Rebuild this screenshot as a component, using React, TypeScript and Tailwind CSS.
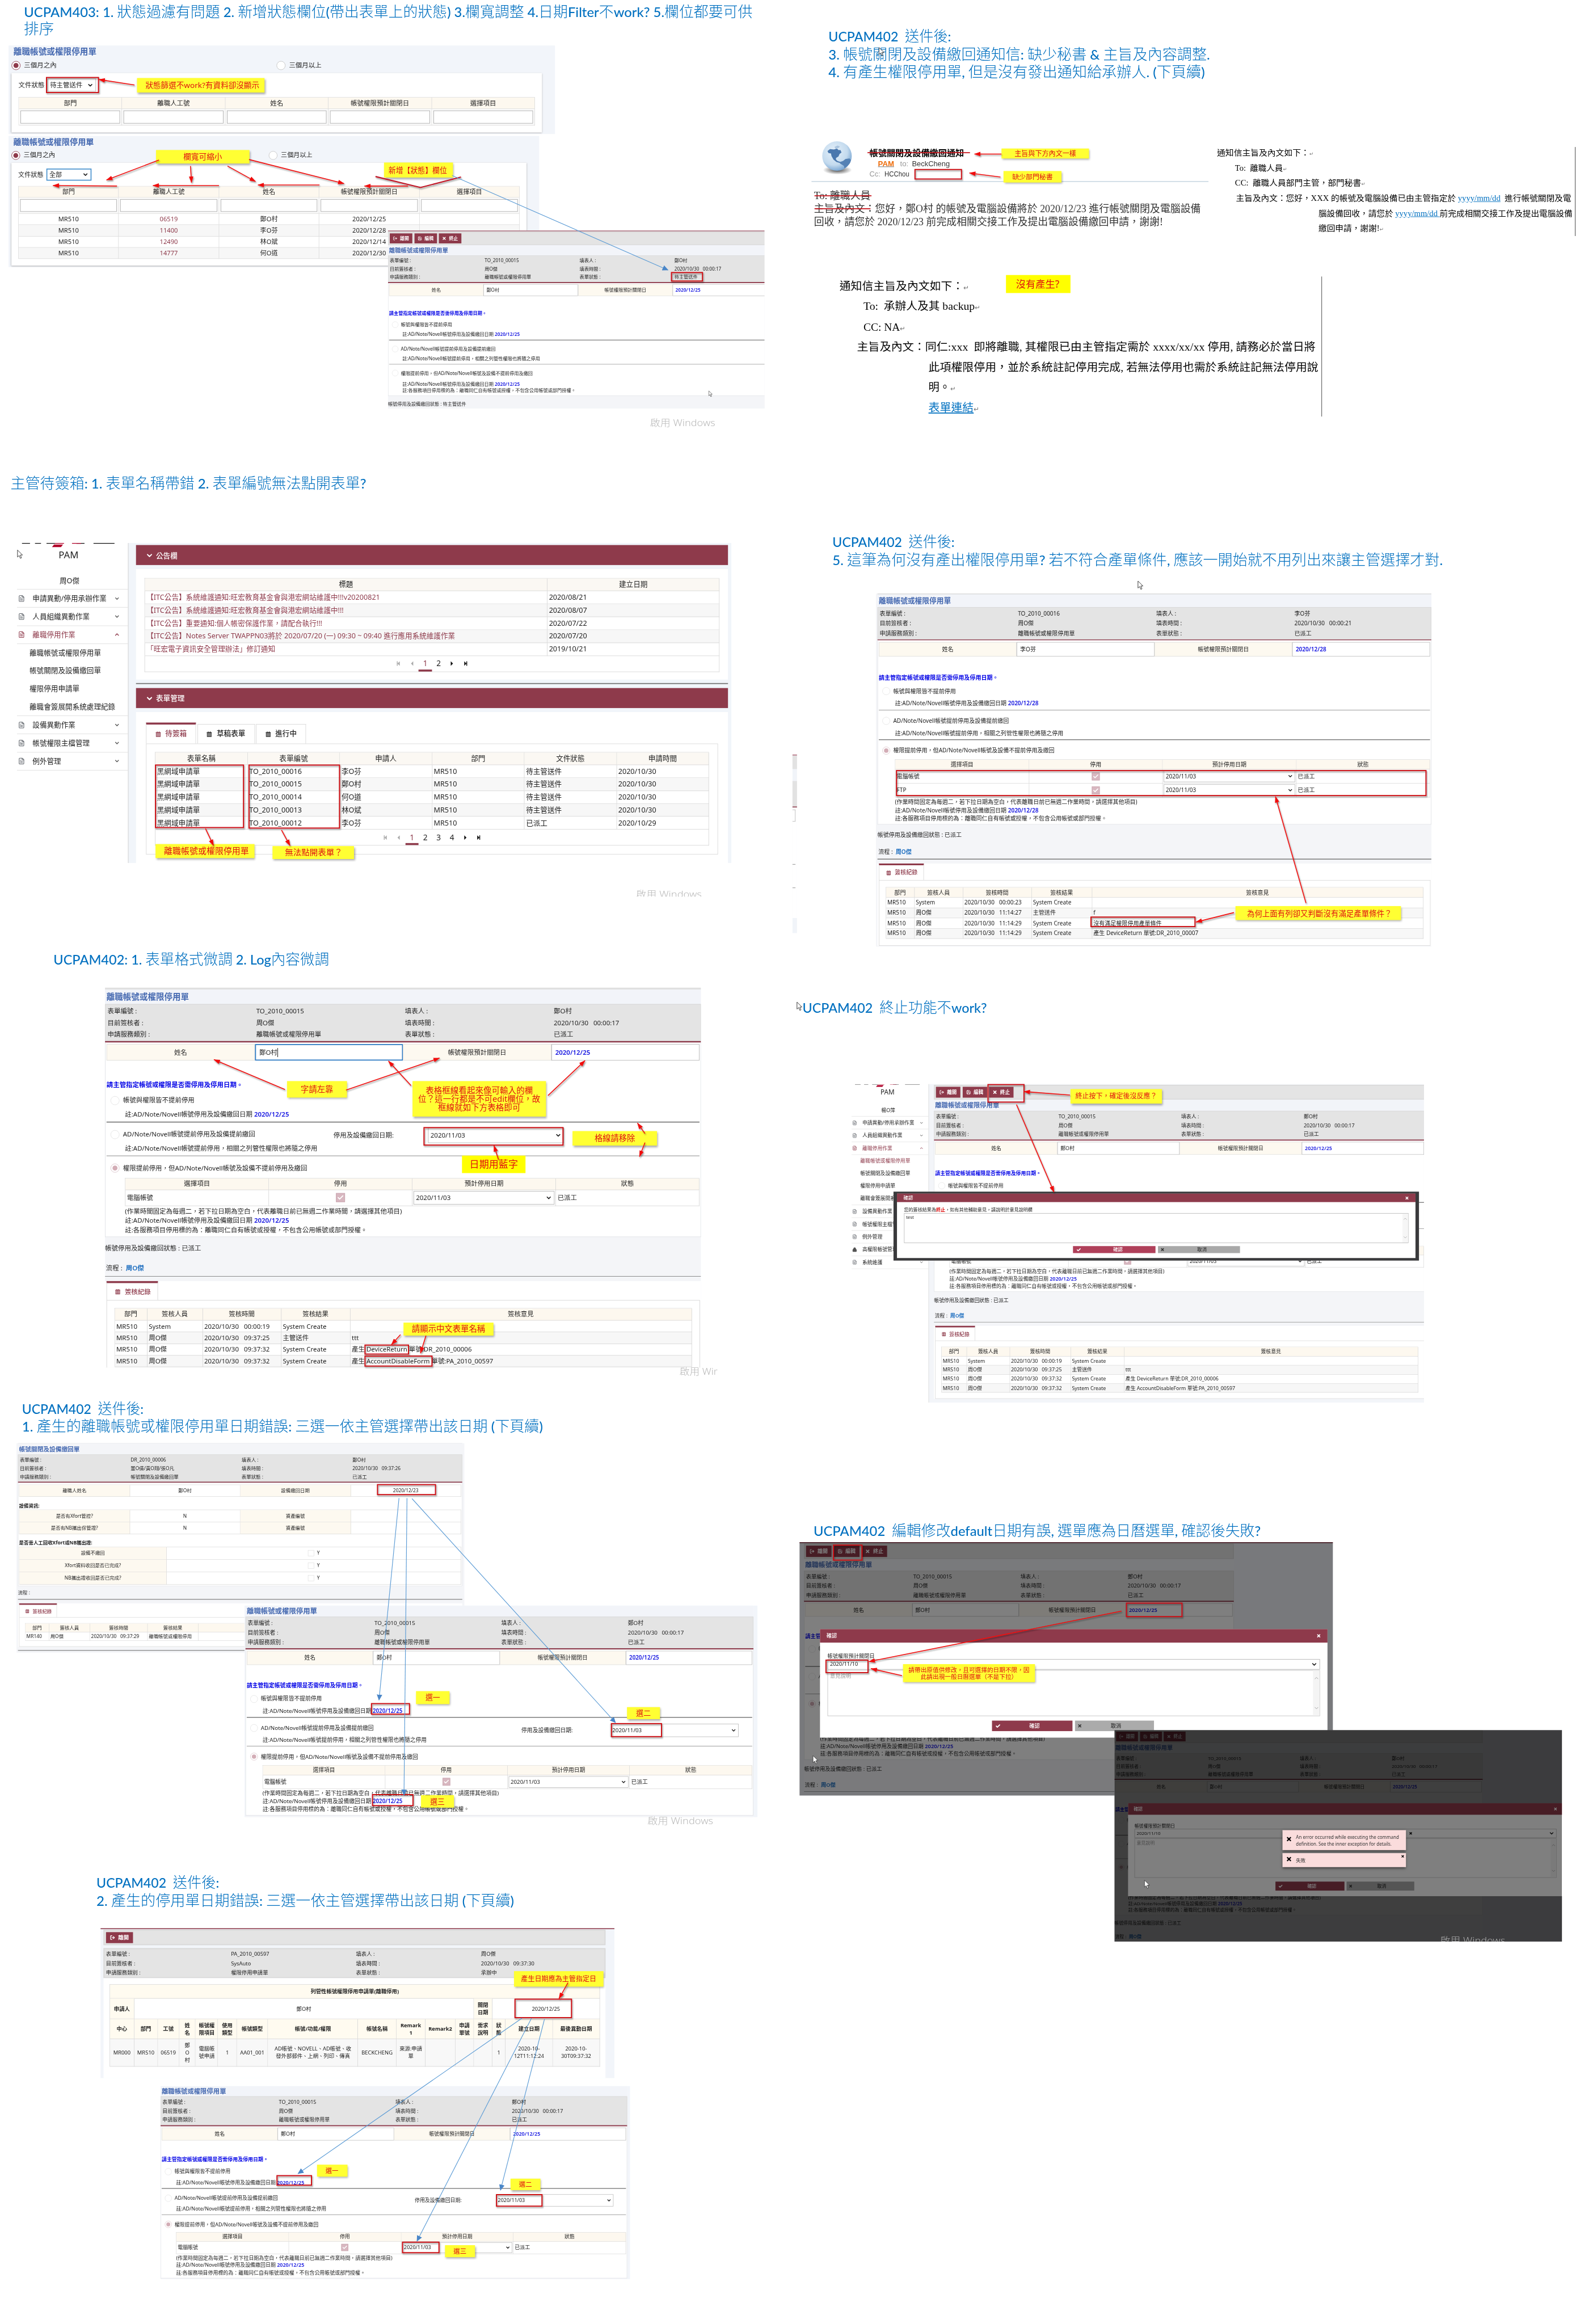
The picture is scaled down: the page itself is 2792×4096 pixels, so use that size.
import { useLayoutEffect, useRef, useState, type ReactNode } from "react";
import { ChevronDown, ChevronUp, FileText, Check, X, LogOut, Save, Lock } from "lucide-react";

/* ---------- text helpers ---------- */

function Fit({ w, className = "", children }: { w: number; className?: string; children: ReactNode }) {
  const ref = useRef<HTMLSpanElement>(null);
  const [k, setK] = useState(1);
  useLayoutEffect(() => {
    if (ref.current) setK(w / ref.current.offsetWidth);
  }, [w]);
  return (
    <span ref={ref} className={`inline-block origin-left whitespace-pre ${className}`} style={{ transform: `scaleX(${k})` }}>
      {children}
    </span>
  );
}

function Mixed({ text }: { text: string }) {
  return (
    <>
      {text.split(/([\x20-\x7e]+)/).map((part, i) =>
        /^[\x20-\x7e]+$/.test(part) ? (
          <span key={i} className="font-['Lato'] text-[0.92em] font-medium">{part}</span>
        ) : (
          part
        )
      )}
    </>
  );
}

type TitleLine = { x: number; cy: number; w: number; text: string };

function Title({ x, cy, w, text }: TitleLine) {
  return (
    <h2
      className="absolute flex h-[36px] items-center font-['Noto_Sans_CJK_TC',sans-serif] text-[29.4px] leading-none font-light text-[#0070c0]"
      style={{ left: x, top: cy - 20 }}
    >
      <Fit w={w}><Mixed text={text} /></Fit>
    </h2>
  );
}

/* ---------- shared widgets ---------- */

function Radio({ on = false, pale = false, dim = false }: { on?: boolean; pale?: boolean; dim?: boolean }) {
  return (
    <span className={`flex h-[18px] w-[18px] shrink-0 items-center justify-center rounded-full border bg-white ${on && !pale ? "border-[#8e3a4b]" : dim ? "border-[#e2e2e2]" : on ? "border-[#d9c3c9]" : "border-[#c4c4c4]"}`}>
      {on && <span className={`h-[10px] w-[10px] rounded-full ${pale ? "bg-[#d3adb6]" : "bg-[#8e3a4b]"}`} />}
    </span>
  );
}

function Select({ children, className = "" }: { children: ReactNode; className?: string }) {
  return (
    <span className={`flex items-center justify-between border border-[#b3b3b3] bg-white px-[4px] ${className}`}>
      {children}
      <ChevronDown className="h-[13px] w-[13px] text-[#222]" strokeWidth={3.5} />
    </span>
  );
}

function BookIcon() {
  return (
    <svg viewBox="0 0 11 12" className="h-[12px] w-[11px]" fill="none" stroke="currentColor">
      <path d="M.5 3h10M1.500 3v8h8V3M3.500 1v10M5.500 2v9M7.500 1v10M1.500 11h8" strokeWidth="1.200" />
    </svg>
  );
}

function Cursor({ className, light = false }: { className: string; light?: boolean }) {
  return (
    <svg viewBox="0 0 12 19" className={`absolute h-[19px] w-[12px] ${className}`}>
      <path d="M1 1v14l3.4-3 2.3 5.6 2.3-1L6.700 11H11z" fill="#fff" stroke={light ? "#333" : "#222"} strokeWidth="1" />
    </svg>
  );
}

/* ---------- filter list pane ---------- */

const filterHeads = ["部門", "離職人工號", "姓名", "帳號權限預計關閉日", "選擇項目"];

function FilterPane({ status, active, rows }: { status: string; active?: boolean; rows: string[][] }) {
  return (
    <div className="w-[1093px] bg-[#f2f5fa] pr-[26px] pb-[3px] pl-[6px]">
      <div className="flex h-[24px] items-center pl-[4px] text-[16.6px] font-bold text-[#4468b0]">離職帳號或權限停用單</div>
      <div className="flex h-[31px] items-center">
        <div className="flex w-[530px] items-center gap-[7px]"><Radio on />三個月之內</div>
        <div className="flex items-center gap-[7px]"><Radio />三個月以上</div>
      </div>
      <div className="bg-white px-[14px] pb-[14px] shadow-[0_1px_3px_#999]">
        <div className="flex h-[48px] items-center gap-[6px]">
          文件狀態
          <Select className={active ? "h-[25px] w-[93px] !border-2 !border-[#4a93cf]" : "h-[26px] w-[97px]"}>{status}</Select>
        </div>
        <div className="border-t border-l border-[#dcdcdc]">
          <div className="grid grid-cols-5 bg-[#fdf8ef]">
            {filterHeads.map((h) => (
              <div key={h} className="flex h-[23px] items-center justify-center border-r border-b border-[#dcdcdc]">{h}</div>
            ))}
            {filterHeads.map((h) => (
              <div key={h} className="h-[33px] border-r border-b border-[#dcdcdc] bg-[#fafafa] px-[3px] py-[3px]">
                <div className="h-full border border-[#ababab] bg-white" />
              </div>
            ))}
          </div>
          {rows.map((r, i) => (
            <div key={r[1]} className={`grid grid-cols-5 ${i % 2 ? "bg-[#f7f7f7]" : "bg-white"}`}>
              {r.map((c, j) => (
                <div key={j} className={`flex h-[23.3px] items-center justify-center border-r border-b border-[#dcdcdc] ${j === 1 ? "text-[#8e3a4b]" : ""}`}>{c}</div>
              ))}
            </div>
          ))}
        </div>
      </div>
    </div>
  );
}

/* ---------- form pieces ---------- */

function InfoBlock({ cells, className = "" }: { cells: string[]; className?: string }) {
  return (
    <div className={`grid h-[74px] grid-cols-4 border border-[#d6d6d6] bg-[#e4e4e4] pt-[2.500px] whitespace-pre ${className}`}>
      {cells.map((c, i) => (
        <div key={i} className="flex h-[22.3px] items-center pl-[4px]">{c}</div>
      ))}
    </div>
  );
}

function ToolButton({ icon, children }: { icon: ReactNode; children: ReactNode }) {
  return (
    <span className="flex h-[28px] w-[63px] items-center justify-center gap-[7px] bg-[#8e3a4b] text-[12.5px] font-bold text-white">
      {icon}
      {children}
    </span>
  );
}

function Toolbar({ full = true }: { full?: boolean }) {
  return (
    <div className="flex h-[38px] items-center gap-[5.500px] border-2 border-[#d9d9d9] bg-[#e4e4e4] pl-[3px]">
      <ToolButton icon={<LogOut className="h-[12px] w-[12px]" strokeWidth={3} />}>離開</ToolButton>
      {full && <ToolButton icon={<Save className="h-[12px] w-[12px]" strokeWidth={2.5} />}>編輯</ToolButton>}
      {full && <ToolButton icon={<X className="h-[12px] w-[12px]" strokeWidth={5} />}>終止</ToolButton>}
    </div>
  );
}

function RecordTab() {
  return (
    <div className="flex h-[38px] w-[103px] items-center gap-[9px] border-x border-t-[4px] border-[#d5d5d5] border-t-[#8e3a4b] bg-white pl-[16px] font-medium text-[#8e3a4b]">
      <BookIcon />簽核紀錄
    </div>
  );
}

const logCols = "grid grid-cols-[65px_111px_157px_138px_1fr]";

function LogTable({ rows }: { rows: string[][] }) {
  return (
    <div className="border-t border-l border-[#d8d8d8] whitespace-pre">
      <div className={`${logCols} bg-[#fdf8ef]`}>
        {["部門", "簽核人員", "簽核時間", "簽核結果", "簽核意見"].map((h) => (
          <div key={h} className="flex h-[23.500px] items-center justify-center border-r border-b border-[#d8d8d8]">{h}</div>
        ))}
      </div>
      {rows.map((r, i) => (
        <div key={i} className={`${logCols} ${i % 2 ? "bg-[#f7f7f7]" : "bg-white"}`}>
          {r.map((c, j) => (
            <div key={j} className="flex h-[23.400px] items-center border-r border-b border-[#d8d8d8] pl-[3px]">{c}</div>
          ))}
        </div>
      ))}
    </div>
  );
}

type FormProps = {
  no?: string;
  who?: string;
  time?: string;
  state?: string;
  date?: string;
  toolbar?: boolean;
  topLine?: string;
  titleClass?: string;
  focused?: boolean;
  picker?: string;
  items?: string[];
  tail?: boolean;
  logs?: string[][];
};

function DisableForm({
  no = "TO_2010_00015",
  who = "鄭O村",
  time = "2020/10/30   00:00:17",
  state = "已派工",
  date = "2020/12/25",
  toolbar = false,
  topLine = "",
  titleClass = "h-[26px]",
  focused = false,
  picker = "",
  items = ["電腦帳號"],
  tail = false,
  logs,
}: FormProps) {
  const stop = (
    <>註:AD/Note/Novell帳號停用及設備繳回日期 <b className="font-semibold text-[#1010e0]">{date}</b></>
  );
  return (
    <div className="w-full bg-[#f4f5f8]">
      {topLine && <div className={topLine} />}
      {toolbar && <Toolbar />}
      <div className={`flex items-center bg-[#f2f4f9] pl-[3px] text-[16.5px] font-bold text-[#4468b0] ${titleClass}`}>離職帳號或權限停用單</div>
      <InfoBlock
        cells={["表單編號 :", no, "填表人 :", who, "目前簽核者 :", "周O傑", "填表時間 :", time, "申請服務類別 :", "離職帳號或權限停用單", "表單狀態 :", state]}
      />
      <div className="h-[2.500px] bg-[#8e3a4b]" />
      <div className="border-x border-b border-[#dcdfe3] bg-white px-[2px] pt-[3.500px] pb-[4px]">
        <div className="grid h-[33px] grid-cols-4">
          <div className="flex items-center justify-center border border-[#dcdcdc] bg-[#fdf9f0]">姓名</div>
          <div className={`flex items-center border pl-[7px] ${focused ? "border-2 border-[#2b79c2]" : "border-[#b5b5b5]"}`}>
            {who}
            {focused && <span className="h-[18px] w-px bg-black" />}
          </div>
          <div className="flex items-center justify-center border border-[#dcdcdc] bg-[#fdf9f0]">帳號權限預計關閉日</div>
          <div className="flex items-center border border-[#b5b5b5] pl-[7px] font-semibold text-[#1010e0]">{date}</div>
        </div>
        <div className="mt-[38px] flex h-[21px] items-center font-bold text-[#0000e6]">請主管指定帳號或權限是否需停用及停用日期。</div>
        <div className="mt-[4px] flex h-[33px] items-center gap-[7px] pl-[8px]"><Radio dim />帳號與權限皆不提前停用</div>
        <div className="flex h-[22px] items-center pl-[37px] whitespace-pre">{stop}</div>
        <div className="mt-[4px] h-[1.500px] bg-[#7d7d7d]" />
        <div className="relative mt-[4px] flex h-[40px] items-center gap-[7px] pl-[8px]">
          <Radio dim />AD/Note/Novell帳號提前停用及設備提前繳回
          {picker && (
            <div className={`absolute top-[10px] flex items-center ${picker}`}>
              <span className="grow">停用及設備繳回日期:</span>
              <Select className={focused ? "h-[31px] w-[272px]" : "h-[31px] w-[301px]"}>2020/11/03</Select>
            </div>
          )}
        </div>
        <div className="flex h-[16px] items-center pl-[37px]">註:AD/Note/Novell帳號提前停用，相關之列管性權限也將隨之停用</div>
        <div className="mt-[6px] h-[1.500px] bg-[#7d7d7d]" />
        <div className="mt-[4px] flex h-[40px] items-center gap-[7px] pl-[8px]">
          <Radio on={items.length > 0} pale dim={items.length === 0} />權限提前停用，但AD/Note/Novell帳號及設備不提前停用及繳回
        </div>
        {items.length > 0 && (
          <div className="ml-[37px] grid grid-cols-4 border-t border-l border-[#d8d8d8]">
            {["選擇項目", "停用", "預計停用日期", "狀態"].map((h) => (
              <div key={h} className="flex h-[22.500px] items-center justify-center border-r border-b border-[#d8d8d8] bg-[#fdf8ef]">{h}</div>
            ))}
            {items.map((it) => [
              <div key={it + 1} className="flex h-[32px] items-center border-r border-b border-[#d8d8d8] pl-[3px]">{it}</div>,
              <div key={it + 2} className="flex h-[32px] items-center justify-center border-r border-b border-[#d8d8d8]">
                <span className="flex h-[18px] w-[18px] items-center justify-center border border-[#c9a6af] bg-[#d8b7c0]">
                  <Check className="h-[14px] w-[14px] text-white" strokeWidth={3.5} />
                </span>
              </div>,
              <div key={it + 3} className="flex h-[32px] items-center border-r border-b border-[#d8d8d8] px-[2px]">
                <Select className="h-[27px] w-full">2020/11/03</Select>
              </div>,
              <div key={it + 4} className="flex h-[32px] items-center border-r border-b border-[#d8d8d8] pl-[3px]">已派工</div>,
            ])}
          </div>
        )}
        <div className="mt-[1px] pl-[37px] leading-[18.800px] whitespace-pre">
          {items.length > 0 && <p>(作業時間固定為每週二，若下拉日期為空白，代表離職日前已無週二作業時間，請選擇其他項目)</p>}
          <p>{stop}</p>
          <p>註:各服務項目停用標的為：離職同仁自有帳號或授權，不包含公用帳號或部門授權。</p>
        </div>
      </div>
      <div className="flex h-[46px] items-center">帳號停用及設備繳回狀態 : {state}</div>
      {tail && (
        <>
          <div className="flex h-[32px] items-center pl-[2px] whitespace-pre">流程 :  <b className="font-semibold text-[#1f6fc0]">周O傑</b></div>
          <div className="h-[1.500px] bg-[#7d7d7d]" />
        </>
      )}
      {logs && (
        <div className="mt-[9px] bg-white px-[2.500px]">
          <RecordTab />
          <div className="border border-[#d5d5d5] px-[15px] pt-[15px] pb-[15px]"><LogTable rows={logs} /></div>
        </div>
      )}
    </div>
  );
}

const baseLogs = [
  ["MR510", "System", "2020/10/30   00:00:19", "System Create", ""],
  ["MR510", "周O傑", "2020/10/30   09:37:25", "主管送件", "ttt"],
  ["MR510", "周O傑", "2020/10/30   09:37:32", "System Create", "產生 DeviceReturn 單號:DR_2010_00006"],
  ["MR510", "周O傑", "2020/10/30   09:37:32", "System Create", "產生 AccountDisableForm 單號:PA_2010_00597"],
];

const ftpLogs = [
  ["MR510", "System", "2020/10/30   00:00:23", "System Create", ""],
  ["MR510", "周O傑", "2020/10/30   11:14:27", "主管送件", "f"],
  ["MR510", "周O傑", "2020/10/30   11:14:29", "System Create", "沒有滿足權限停用產單條件"],
  ["MR510", "周O傑", "2020/10/30   11:14:29", "System Create", "產生 DeviceReturn 單號:DR_2010_00007"],
];

/* ---------- side menu ---------- */

function Sidebar({ user, activeSub, extra }: { user: string; activeSub?: boolean; extra?: boolean }) {
  const item = (label: string, open = false, lock = false) => (
    <div key={label} className={`flex h-[36.300px] items-center border-t border-[#dedede] pr-[16px] pl-[2px] ${open ? "text-[#8e3a4b]" : ""}`}>
      {lock ? (
        <Lock className="h-[14px] w-[14px] text-[#444]" fill="#555" />
      ) : (
        <FileText className={`h-[16px] w-[14px] ${open ? "" : "text-[#5a5f66]"}`} strokeWidth={2} />
      )}
      <span className="ml-[15px] grow">{label}</span>
      {open ? <ChevronUp className="h-[12px] w-[12px]" strokeWidth={3} /> : <ChevronDown className="h-[12px] w-[12px] text-[#555]" strokeWidth={3} />}
    </div>
  );
  return (
    <div className="h-[640px] w-[222px] bg-white text-[14.300px]">
      <svg viewBox="0 0 222 10" className="block h-[10px] w-[222px]">
        <path d="M10 .6h16M36 .6h12M59 .6h17M128 .6h-1M119 .6h16M153 .6h42" stroke="#111" strokeWidth="1.300" />
        <path d="M76 .6h18M110 .6h18" stroke="#b00028" strokeWidth="1.300" />
        <path d="M74 3h18l-4 5H70z" fill="#b00028" />
      </svg>
      <div className="flex h-[26px] items-center justify-center pr-[16px] text-[19px]"><Fit w={40}>PAM</Fit></div>
      <div className="mt-[28px] flex h-[22px] items-center justify-center pr-[12px]">{user}</div>
      <div className="h-[6px]" />
      {item("申請異動/停用承辦作業")}
      {item("人員組織異動作業")}
      {item("離職停用作業", true)}
      <div className="border-t border-[#dedede] pl-[25px]">
        {["離職帳號或權限停用單", "帳號關閉及設備繳回單", "權限停用申請單", "離職會簽展開系統處理紀錄"].map((s, i) => (
          <div key={s} className={`flex h-[35.800px] items-center ${activeSub && i === 0 ? "text-[#8e3a4b]" : ""}`}>{s}</div>
        ))}
      </div>
      {item("設備異動作業")}
      {item("帳號權限主檔管理")}
      {item("例外管理")}
      {extra && item("高權限帳號管理", false, true)}
      {extra && item("系統維護")}
      <div className="border-t border-[#dedede]" />
    </div>
  );
}

/* ---------- portal home ---------- */

function PagerArrow({ bar = false, next = false }: { bar?: boolean; next?: boolean }) {
  return (
    <span className={`flex w-[26.700px] items-center justify-center ${next ? "text-[#111]" : "text-[#aaa]"}`}>
      <svg viewBox="0 0 8 10" className={`h-[10px] w-[8px] ${next ? "" : "-scale-x-100"}`}>
        <path d="M1.500 .5v9L6 5z" fill="currentColor" />
        {bar && <path d="M6.500 .5v9" stroke="currentColor" strokeWidth="1.600" />}
      </svg>
    </span>
  );
}

function Pager({ pages }: { pages: number[] }) {
  return (
    <div className="flex items-stretch justify-center border-x border-b border-[#d8d8d8] text-[15.500px]">
      <PagerArrow bar />
      <PagerArrow />
      {pages.map((p) => (
        <span key={p} className={`flex w-[26.700px] items-center justify-center pt-[3px] ${p === 1 ? "border-b-[4px] border-[#8e3a4b] text-[#8e3a4b]" : "pb-[4px]"}`}>{p}</span>
      ))}
      <PagerArrow next />
      <PagerArrow next bar />
    </div>
  );
}

function PanelHead({ children }: { children: ReactNode }) {
  return (
    <div className="flex h-[40px] items-center gap-[5px] bg-[#8e3a4b] pt-[2px] pl-[19px] text-[14.300px] font-medium text-white">
      <ChevronDown className="h-[16px] w-[16px]" strokeWidth={3.500} />{children}
    </div>
  );
}

const notices = [
  ["【ITC公告】系統維護通知:旺宏教育基金會與港宏網站維護中!!!v20200821", "2020/08/21"],
  ["【ITC公告】系統維護通知:旺宏教育基金會與港宏網站維護中!!!", "2020/08/07"],
  ["【ITC公告】重要通知:個人帳密保護作業，請配合執行!!!", "2020/07/22"],
  ["【ITC公告】Notes Server TWAPPN03將於 2020/07/20 (一) 09:30 ~ 09:40 進行應用系統維護作業", "2020/07/20"],
  ["「旺宏電子資訊安全管理辦法」修訂通知", "2019/10/21"],
];

const pending = [
  ["黑網域申請單", "TO_2010_00016", "李O芬", "MR510", "待主管送件", "2020/10/30"],
  ["黑網域申請單", "TO_2010_00015", "鄭O村", "MR510", "待主管送件", "2020/10/30"],
  ["黑網域申請單", "TO_2010_00014", "何O道", "MR510", "待主管送件", "2020/10/30"],
  ["黑網域申請單", "TO_2010_00013", "林O斌", "MR510", "待主管送件", "2020/10/30"],
  ["黑網域申請單", "TO_2010_00012", "李O芬", "MR510", "已派工", "2020/10/29"],
];

function Portal() {
  return (
    <div className="flex h-[640px] w-[1429px] overflow-hidden text-[14.300px]">
      <Sidebar user="周O傑" />
      <div className="grow border-l border-[#ccc] bg-[#f1f5fa] pt-[4px] pr-[7px] pl-[15px]">
        <PanelHead>公告欄</PanelHead>
        <div className="mt-[8px] h-[221px] bg-white px-[17px] pt-[17.500px]">
          <div className="grid grid-cols-[1fr_344px] border-t border-l border-[#d8d8d8]">
            {["標題", "建立日期"].map((h) => (
              <div key={h} className="flex h-[25px] items-center justify-center border-r border-b border-[#d8d8d8] bg-[#fbf8f3]">{h}</div>
            ))}
            {notices.map((n, i) => [
              <div key={i + "a"} className={`flex h-[26px] items-center border-r border-b border-[#d8d8d8] pl-[3px] whitespace-pre text-[#8e3a4b] ${i % 2 ? "bg-[#f7f7f7]" : ""}`}>{n[0]}</div>,
              <div key={i + "b"} className={`flex h-[26px] items-center border-r border-b border-[#d8d8d8] pl-[3px] ${i % 2 ? "bg-[#f7f7f7]" : ""}`}>{n[1]}</div>,
            ])}
          </div>
          <div className="grid h-[32px]"><Pager pages={[1, 2]} /></div>
        </div>
        <div className="mt-[7px] mb-[8px] h-[1.500px] bg-[#777]" />
        <PanelHead>表單管理</PanelHead>
        <div className="mt-[8px] h-[310px] bg-white px-[20px] pt-[21px]">
          <div className="flex items-end gap-[2.500px] font-medium">
            <div className="flex h-[42px] w-[100px] items-center justify-center gap-[9px] border-x border-t-[4px] border-[#d8d8d8] border-t-[#8e3a4b] text-[#8e3a4b]"><BookIcon />待簽箱</div>
            <div className="flex h-[39px] w-[115px] items-center justify-center gap-[9px] border border-b-0 border-[#d8d8d8]"><BookIcon />草稿表單</div>
            <div className="flex h-[39px] w-[100px] items-center justify-center gap-[9px] border border-b-0 border-[#d8d8d8]"><BookIcon />進行中</div>
          </div>
          <div className="h-[222px] border border-[#d8d8d8] px-[17px] pt-[16px]">
            <div className="grid grid-cols-6 border-t border-l border-[#d8d8d8]">
              {["表單名稱", "表單編號", "申請人", "部門", "文件狀態", "申請時間"].map((h) => (
                <div key={h} className="flex h-[25.800px] items-center justify-center border-r border-b border-[#d8d8d8] bg-[#fbf8f3]">{h}</div>
              ))}
              {pending.flatMap((r, i) =>
                r.map((c, j) => (
                  <div key={`${i}-${j}`} className={`flex h-[25.800px] items-center border-r border-b border-[#d8d8d8] pl-[3px] ${i % 2 ? "bg-[#f7f7f7]" : ""}`}>{c}</div>
                ))
              )}
            </div>
            <div className="grid h-[32px]"><Pager pages={[1, 2, 3, 4]} /></div>
          </div>
        </div>
      </div>
    </div>
  );
}

/* ---------- device return form ---------- */

function ReturnForm() {
  const label = "flex items-center justify-center border-r border-b border-[#d5d5d5] bg-[#fdf9f0]";
  const value = "flex items-center justify-center border-r border-b border-[#d5d5d5]";
  return (
    <div className="w-[1219px] bg-[#f4f5f8] pr-[6px] pl-[4px]">
      <div className="flex h-[31px] items-center border-t border-[#cfd3d8] pl-[3px] text-[16.500px] font-bold text-[#4468b0]">帳號關閉及設備繳回單</div>
      <InfoBlock
        cells={["表單編號 :", "DR_2010_00006", "填表人 :", "鄭O村", "目前簽核者 :", "董O倩/黃O翔/張O凡", "填表時間 :", "2020/10/30   09:37:26", "申請服務類別 :", "帳號關閉及設備繳回單", "表單狀態 :", "已派工"]}
      />
      <div className="h-[3px] bg-[#8e3a4b]" />
      <div className="border border-[#dcdfe3] bg-white px-[2px] pt-[4px] pb-[3px]">
        <div className="grid h-[33px] grid-cols-4 border-t border-l border-[#d5d5d5]">
          <div className={label}>離職人姓名</div><div className={value}>鄭O村</div>
          <div className={label}>設備繳回日期</div><div className={value}>2020/12/23</div>
        </div>
        <div className="mt-[14px] flex h-[21px] items-center font-bold">設備資訊:</div>
        <div className="grid h-[67px] grid-cols-4 grid-rows-2 border-t border-l border-[#d5d5d5]">
          <div className={label}>是否有Xfort管控?</div><div className={value}>N</div>
          <div className={label}>資產編號</div><div className={value} />
          <div className={label}>是否有NB攜出保管證?</div><div className={value}>N</div>
          <div className={label}>資產編號</div><div className={value} />
        </div>
        <div className="mt-[13px] flex h-[21px] items-center font-bold">是否需人工回收Xfort或NB攜出證:</div>
        <div className="grid h-[103px] grid-cols-[1fr_2fr] grid-rows-3 border-t border-l border-[#d5d5d5]">
          {["設備不繳回", "Xfort資料收回是否已完成?", "NB攜出證收回是否已完成?"].map((t) => [
            <div key={t} className={label}>{t}</div>,
            <div key={t + "v"} className={`${value} gap-[8px]`}><span className="h-[17px] w-[17px] border border-[#ddd]" />Y</div>,
          ])}
        </div>
      </div>
      <div className="flex h-[35px] items-center whitespace-pre">流程 : </div>
      <div className="h-[2px] bg-[#888]" />
      <div className="mt-[10px] bg-white px-[3px]">
        <RecordTab />
        <div className="border border-[#d5d5d5] px-[15px] py-[15px]">
          <LogTable rows={[["MR140", "周O傑", "2020/10/30   09:37:29", "離職帳號或權限停用", ""]]} />
        </div>
      </div>
      <div className="mt-[9px] h-[2px] bg-[#888]" />
      <div className="h-[9px]" />
    </div>
  );
}

/* ---------- permission disable request ---------- */

const reqCols = "grid-cols-[48.600px_47.100px_42.900px_32.900px_45px_37.100px_62.900px_180px_76.400px_58.600px_59.300px_37.100px_37.100px_26.400px_94.300px_94.300px]";

function RequestForm() {
  const th = "flex items-center justify-center border-r border-b border-[#d8d8d8] bg-[#fffbf0] text-center font-bold whitespace-pre";
  const td = "flex items-center justify-center border-r border-b border-[#d8d8d8] text-center whitespace-pre";
  return (
    <div className="h-[300px] w-[1028px] border-t-2 border-[#8e3a4b] bg-[#f2f5fa] pr-[18px] pl-[6px] text-[10.600px]">
      <div className="mt-px flex h-[31px] items-center border-2 border-[#d9d9d9] bg-[#e4e4e4] pl-[3px]">
        <span className="flex h-[22px] w-[54px] items-center justify-center gap-[6px] bg-[#8e3a4b] font-bold text-white"><LogOut className="h-[10px] w-[10px]" strokeWidth={3.500} />離開</span>
      </div>
      <div className="mt-[6px] grid h-[60px] grid-cols-4 border-2 border-[#d9d9d9] bg-[#e4e4e4] whitespace-pre">
        {["表單編號 :", "PA_2010_00597", "填表人 :", "周O傑", "目前簽核者 :", "SysAuto", "填表時間 :", "2020/10/30   09:37:30", "申請服務類別 :", "權限停用申請單", "表單狀態 :", "承辦中"].map((c, i) => (
          <div key={i} className="flex h-[18.900px] items-center pl-[3px]">{c}</div>
        ))}
      </div>
      <div className="h-full bg-white px-[12px] pt-[12px] leading-[15px]">
        <div className={`grid w-[980px] border-t border-l border-[#d8d8d8] ${reqCols}`}>
          <div className={`${th} col-span-16 h-[28.300px]`}>列管性帳號權限停用申請單(離職停用)</div>
          <div className={`${th} h-[41px]`}>申請人</div>
          <div className={`${td} col-span-11`}>鄭O村</div>
          <div className={th}>{"關閉\n日期"}</div>
          <div className={`${td} col-span-3`}>2020/12/25</div>
          {["中心", "部門", "工號", "姓\n名", "帳號權\n限項目", "使用\n類型", "帳號類型", "帳號/功能/權限", "帳號名稱", "Remark\n1", "Remark2", "申請\n單號", "需求\n說明", "狀\n態", "建立日期", "最後異動日期"].map((h) => (
            <div key={h} className={`${th} h-[40px]`}>{h}</div>
          ))}
          {["MR000", "MR510", "06519", "鄭\nO\n村", "電腦帳\n號申請", "1", "AA01_001", "AD帳號、NOVELL、AD帳號、收\n發外部郵件、上網、列印、傳真", "BECKCHENG", "來源:申請\n單", "", "", "", "1", "2020-10-\n12T11:12:24", "2020-10-\n30T09:37:32"].map((c, i) => (
            <div key={i} className={`${td} h-[55px] bg-[#f8f8f8]`}>{c}</div>
          ))}
        </div>
      </div>
    </div>
  );
}

/* ---------- edit dialog over dimmed form ---------- */

function DimmedForm({ cursor = false }: { cursor?: boolean }) {
  return (
    <div className="relative h-[507px] w-[1067px] overflow-hidden bg-[#f1f3f8]">
      <div className="h-[2px] bg-[#8e3a4b]" />
      <div className="mt-px ml-[9px] h-[600px] w-[1060px] origin-top-left scale-[0.811] text-[13px]">
        <DisableForm toolbar tail titleClass="h-[29px]" />
      </div>
      <div className="absolute inset-0 bg-black/50" />
      <div className="absolute top-[174px] left-[41px] h-[217px] w-[1015px] bg-white text-[10.500px]">
        <div className="flex h-[27px] items-center justify-between bg-[#8e3a4b] px-[13px] font-medium text-white">確認<X className="h-[9px] w-[9px]" strokeWidth={5} /></div>
        <div className="px-[15px]">
          <div className="mt-[19px] flex h-[14px] items-center">帳號權限預計關閉日</div>
          <Select className="h-[21px] w-full">2020/11/10</Select>
          <div className="mt-px flex h-[92px] justify-between border border-[#c2c2c2] pl-[4px] text-[#999]">
            <span className="mt-[5px]">意見說明</span>
            <span className="flex h-full w-[13px] flex-col items-center justify-between bg-[#f4f4f4] py-[9px]"><ChevronUp className="h-[12px] w-[12px]" /><ChevronDown className="h-[12px] w-[12px]" /></span>
          </div>
          <div className="mt-[9px] flex justify-center gap-[5px] pr-[3px] font-medium">
            <span className="flex h-[21px] w-[161px] items-center bg-[#8e3a4b] pl-[7px] text-white"><Check className="h-[10px] w-[10px]" strokeWidth={5} /><span className="grow pr-[8px] text-center">確認</span></span>
            <span className="flex h-[21px] w-[158px] items-center bg-[#ababab] pl-[5px] text-[#333]"><X className="h-[9px] w-[9px]" strokeWidth={5} /><span className="grow pr-[8px] text-center">取消</span></span>
          </div>
        </div>
      </div>
      {cursor && <Cursor className="top-[426px] left-[26px]" light />}
    </div>
  );
}

function Toast({ children, className }: { children: ReactNode; className: string }) {
  return (
    <div className={`flex w-[247px] items-center gap-[8px] bg-[#fadcdc] pl-[7px] text-[9.600px] leading-[12.500px] text-[#333] shadow-[0_2px_5px_#0008] ${className}`}>
      <X className="mb-[4px] h-[12px] w-[12px] shrink-0 text-black" strokeWidth={5} />
      <span className="flex grow flex-col items-start pt-[3px]">{children}</span>
      <X className="mt-[3px] mr-[3px] h-[7px] w-[7px] shrink-0 self-start text-black" strokeWidth={5} />
    </div>
  );
}

/* ---------- annotations ---------- */

const titles: TitleLine[] = [
  { x: 48, cy: 24, w: 1457, text: "UCPAM403: 1. 狀態過濾有問題 2. 新增狀態欄位(帶出表單上的狀態) 3.欄寬調整 4.日期Filter不work? 5.欄位都要可供" },
  { x: 48, cy: 58, w: 60, text: "排序" },
  { x: 21, cy: 967, w: 712, text: "主管待簽箱: 1. 表單名稱帶錯 2. 表單編號無法點開表單?" },
  { x: 107, cy: 1919, w: 551, text: "UCPAM402: 1. 表單格式微調 2. Log內容微調" },
  { x: 44, cy: 2818, w: 243, text: "UCPAM402  送件後:" },
  { x: 44, cy: 2853, w: 1042, text: "1. 產生的離職帳號或權限停用單日期錯誤: 三選一依主管選擇帶出該日期 (下頁續)" },
  { x: 193, cy: 3765, w: 245, text: "UCPAM402  送件後:" },
  { x: 193, cy: 3801, w: 835, text: "2. 產生的停用單日期錯誤: 三選一依主管選擇帶出該日期 (下頁續)" },
  { x: 1657, cy: 73, w: 245, text: "UCPAM402  送件後:" },
  { x: 1657, cy: 109, w: 763, text: "3. 帳號關閉及設備繳回通知信: 缺少秘書 & 主旨及內容調整." },
  { x: 1657, cy: 144, w: 753, text: "4. 有產生權限停用單, 但是沒有發出通知給承辦人. (下頁續)" },
  { x: 1665, cy: 1084, w: 244, text: "UCPAM402  送件後:" },
  { x: 1665, cy: 1120, w: 1221, text: "5. 這筆為何沒有產出權限停用單? 若不符合產單條件, 應該一開始就不用列出來讓主管選擇才對." },
  { x: 1605, cy: 2015, w: 369, text: "UCPAM402  終止功能不work?" },
  { x: 1627, cy: 3062, w: 894, text: "UCPAM402  編輯修改default日期有誤, 選單應為日曆選單, 確認後失敗?" },
];

type NoteBox = { x: number; y: number; w: number; h: number; t: string[]; tw: number; size: number; flat?: boolean };

const notes: NoteBox[] = [
  { x: 274, y: 156, w: 255, h: 29, t: ["狀態篩選不work?有資料卻沒顯示"], tw: 228, size: 15 },
  { x: 312, y: 300, w: 187, h: 27, t: ["欄寬可縮小"], tw: 78, size: 15.5 },
  { x: 768, y: 325, w: 138, h: 30, t: ["新增【狀態】欄位"], tw: 117, size: 15 },
  { x: 311, y: 1688, w: 198, h: 28, t: ["離職帳號或權限停用單"], tw: 170, size: 16.4 },
  { x: 545, y: 1692, w: 163, h: 26, t: ["無法點開表單？"], tw: 115, size: 16 },
  { x: 574, y: 2162, w: 120, h: 33, t: ["字請左靠"], tw: 65, size: 16.3 },
  { x: 825, y: 2162, w: 267, h: 71, t: ["表格框線看起來像可輸入的欄", "位？這一行都是不可edit欄位，故", "框線就如下方表格即可"], tw: 0, size: 16.5 },
  { x: 1145, y: 2262, w: 169, h: 29, t: ["格線請移除"], tw: 81, size: 16.2 },
  { x: 924, y: 2311, w: 127, h: 35, t: ["日期用藍字"], tw: 97, size: 19.4, flat: true },
  { x: 807, y: 2645, w: 180, h: 26, t: ["請顯示中文表單名稱"], tw: 147, size: 16.3 },
  { x: 832, y: 3382, w: 67, h: 26, t: ["選一"], tw: 29, size: 14.6 },
  { x: 1254, y: 3414, w: 66, h: 24, t: ["選二"], tw: 29, size: 14.6 },
  { x: 842, y: 3590, w: 66, h: 25, t: ["選三"], tw: 29, size: 14.6 },
  { x: 634, y: 4329, w: 61, h: 24, t: ["選一"], tw: 26, size: 13.4 },
  { x: 1021, y: 4357, w: 60, h: 23, t: ["選二"], tw: 26, size: 13.4 },
  { x: 890, y: 4490, w: 60, h: 24, t: ["選三"], tw: 26, size: 13.4 },
  { x: 1028, y: 3942, w: 179, h: 31, t: ["產生日期應為主管指定日"], tw: 151, size: 13.8 },
  { x: 2003, y: 297, w: 175, h: 20, t: ["主旨與下方內文一樣"], tw: 123, size: 13.6 },
  { x: 2007, y: 342, w: 116, h: 23, t: ["缺少部門秘書"], tw: 81, size: 13.5 },
  { x: 2012, y: 550, w: 129, h: 36, t: ["沒有產生?"], tw: 87, size: 20, flat: true },
  { x: 2471, y: 1812, w: 331, h: 28, t: ["為何上面有列卻又判斷沒有滿足產單條件？"], tw: 290, size: 15 },
  { x: 2141, y: 2178, w: 183, h: 29, t: ["終止按下，確定後沒反應？"], tw: 163, size: 13.6 },
  { x: 1806, y: 3328, w: 264, h: 36, t: ["請帶出原值供修改，且可選擇的日期不限，因", "此請出現一般日曆選單（不是下拉）"], tw: 0, size: 12.1 },
];

const redBoxes = [
  [92, 154, 106, 32], [1342, 544, 64, 19], [310, 1529, 178, 127], [497, 1529, 183, 128],
  [847, 2254, 280, 37], [729, 2689, 89, 20], [729, 2711, 136, 22],
  [754, 2968, 118, 22], [742, 3406, 78, 23], [1222, 3446, 102, 28], [744, 3588, 83, 24],
  [1029, 3997, 115, 39], [553, 4350, 71, 21], [992, 4388, 93, 25], [804, 4483, 75, 23],
  [1829, 338, 95, 21], [1792, 1540, 1061, 52], [2181, 1833, 210, 21],
  [1975, 2168, 74, 37], [1666, 3089, 59, 32], [2252, 3205, 113, 29], [1651, 3319, 86, 27],
];

const redArrows = [
  [269, 170, 198, 159], [318, 320, 213, 360], [381, 332, 383, 365], [455, 332, 511, 363], [498, 319, 688, 367],
  [234, 372, 106, 371], [438, 371, 306, 371], [639, 370, 516, 370], [816, 372, 729, 372],
  [411, 1657, 427, 1691], [563, 1660, 580, 1691],
  [570, 2179, 428, 2119], [692, 2180, 879, 2116], [822, 2171, 777, 2122], [1096, 2191, 1170, 2121],
  [1290, 2267, 1275, 2246], [1290, 2285, 1279, 2313], [997, 2319, 988, 2291], [801, 2669, 783, 2689], [852, 2671, 841, 2706],
  [1136, 3965, 1118, 3997], [2003, 308, 1949, 308], [2001, 354, 1939, 346],
  [2612, 1806, 2551, 1593], [2468, 1825, 2392, 1844],
  [2140, 2190, 2048, 2183], [2033, 2209, 2108, 2384], [2243, 3222, 1738, 3323], [1804, 3351, 1742, 3337],
];

const blueArrows = [
  [904, 351, 1336, 540], [798, 2996, 758, 3400], [814, 2996, 808, 3590], [824, 2997, 1231, 3445],
  [1044, 4036, 596, 4347], [1063, 4036, 834, 4482], [1089, 4038, 1001, 4380],
];

function Note({ x, y, w, h, t, tw, size, flat }: NoteBox) {
  return (
    <div
      className={`absolute flex flex-col items-center justify-center leading-[1.080] whitespace-nowrap text-[#e01010] ${flat ? "bg-[#ffff00]" : "bg-[#ffff33] shadow-[2px_3px_4px_#0005]"}`}
      style={{ left: x, top: y, width: w, height: h, fontSize: size }}
    >
      {t.map((line) => (tw ? <Fit key={line} w={tw}>{line}</Fit> : <span key={line}>{line}</span>))}
    </div>
  );
}

function Annotations() {
  return (
    <svg className="absolute inset-0 h-[4648px] w-[3168px]" viewBox="0 0 3168 4648" fill="none">
      <defs>
        <marker id="red" markerUnits="userSpaceOnUse" markerWidth="14" markerHeight="10" refX="12" refY="5" orient="auto"><path d="M0 0.500l13 4.500-13 4.500z" fill="#f01010" /></marker>
        <marker id="blue" markerUnits="userSpaceOnUse" markerWidth="14" markerHeight="12" refX="11" refY="5.5" orient="auto"><path d="M0 0l12 5.500-12 5.500z" fill="#4a86c8" /></marker>
        <filter id="sh" filterUnits="userSpaceOnUse" x="0" y="0" width="3168" height="4648"><feDropShadow dx="1.500" dy="2.500" stdDeviation="1.500" floodOpacity=".4" /></filter>
      </defs>
      <g filter="url(#sh)">
        {redBoxes.map(([x, y, w, h]) => <rect key={`${x}-${y}`} x={x + 1} y={y + 1} width={w - 2} height={h - 2} stroke="#cc0f12" strokeWidth="2.200" />)}
        {redArrows.map(([a, b, c, d]) => <path key={`${a}-${b}-${c}`} d={`M${a} ${b}L${c} ${d}`} stroke="#f01010" strokeWidth="1.800" markerEnd="url(#red)" />)}
        <path d="M751 353l90 22 81-21" stroke="#c01525" strokeWidth="2.400" />
      </g>
      {blueArrows.map(([a, b, c, d]) => <path key={`${a}-${b}-${c}`} d={`M${a} ${b}L${c} ${d}`} stroke="#5b9bd5" strokeWidth="1.300" markerEnd="url(#blue)" />)}
      <path d="M1735 305.500h205M1629 391.500h114M1629 417.500h112" stroke="#c8141c" strokeWidth="2" />
    </svg>
  );
}

/* ---------- mail samples ---------- */

function Ret() {
  return <span className="font-['DejaVu_Sans'] text-[0.600em] text-[#777]">↵</span>;
}

function MailView() {
  return (
    <div className="absolute top-[280px] left-[1623px] h-[190px] w-[794px]">
      <div className="flex h-[84px] border-b-2 border-[#cfdbe5]">
        <svg viewBox="0 0 80 74" className="ml-[11px] h-[74px] w-[80px]">
          <defs>
            <radialGradient id="globe" cx=".4" cy=".35" r=".7"><stop offset="0" stopColor="#e6f1fa" /><stop offset=".65" stopColor="#c3daee" /><stop offset="1" stopColor="#6f9fcf" /></radialGradient>
            <radialGradient id="gsh"><stop offset="0" stopColor="#444" /><stop offset="1" stopColor="#4440" /></radialGradient>
          </defs>
          <ellipse cx="41" cy="60" rx="29" ry="9" fill="url(#gsh)" />
          <circle cx="40" cy="32" r="29.500" fill="url(#globe)" />
          <path d="M21 22l5-4 8 1 6-2 3 3 4 0 2 5-4 3-2 5-5 3 0 3 3 3 6 2-1 2-7-2-6-5-4-7-1-5-5-1z" fill="#4a78ae" />
          <path d="M46 44l6-2 5-4 8-1 3 3-2 6-5 6-6 5-1-5-3-2-5-3z" fill="#5582b5" />
          <path d="M35 14l6-3 5 2-3 3-6 1z" fill="#a9c3de" />
        </svg>
        <div className="ml-[25px] flex flex-col font-['Liberation_Sans','Noto_Sans_CJK_TC',sans-serif] leading-none text-[#333]">
          <div className="mt-[17px] flex h-[20px] items-center text-[17.200px] font-bold text-black">帳號關閉及設備繳回通知</div>
          <div className="flex h-[19px] items-center pl-[17px] text-[15px]">
            <span className="mr-[12px] font-bold text-[#ee6c0a] underline decoration-[#666]">PAM</span><span className="mr-[7px] text-[#999]">to:</span><Fit w={76}>BeckCheng</Fit>
          </div>
          <div className="flex h-[24px] items-center text-[14.500px]"><span className="mr-[8px] text-[#999]">Cc:</span><Fit w={50}>HCChou</Fit></div>
        </div>
      </div>
      <div className="pt-[14px] pl-[5px] font-['Liberation_Serif','Noto_Sans_CJK_TC',serif] text-[20.500px] leading-none text-[#333]">
        <p className="flex h-[26px] items-center"><Fit w={113}>To: 離職人員</Fit></p>
        <p className="flex h-[26px] items-center"><Fit w={774}>主旨及內文：您好，鄭O村 的帳號及電腦設備將於 2020/12/23 進行帳號關閉及電腦設備</Fit></p>
        <p className="flex h-[26px] items-center"><Fit w={698}>回收，請您於 2020/12/23 前完成相關交接工作及提出電腦設備繳回申請，謝謝!</Fit></p>
      </div>
    </div>
  );
}

function Samples() {
  const small = "flex h-[30.200px] items-center";
  const large = "flex h-[40.500px] items-center";
  return (
    <>
      <div className="absolute top-[294px] left-[2434px] h-[178px] w-[717px] border-r-[1.500px] border-[#333] font-['Liberation_Serif','Noto_Sans_CJK_TC',serif] text-[16px] leading-none text-black">
        <p className={`${small} -mt-[3px]`}><Fit w={193}>通知信主旨及內文如下：<Ret /></Fit></p>
        <p className={`${small} pl-[36px]`}><Fit w={104}>To:  離職人員<Ret /></Fit></p>
        <p className={`${small} pl-[36px]`}><Fit w={261}>CC:  離職人員部門主管，部門秘書<Ret /></Fit></p>
        <p className={`${small} pl-[38px]`}><Fit w={670}>主旨及內文：您好，XXX 的帳號及電腦設備已由主管指定於 <span className="text-[#0070c0] underline">yyyy/mm/dd</span>  進行帳號關閉及電</Fit></p>
        <p className={`${small} pl-[203px]`}><Fit w={508}>腦設備回收，請您於 <span className="text-[#0070c0] underline">yyyy/mm/dd </span>前完成相關交接工作及提出電腦設備</Fit></p>
        <p className={`${small} pl-[203px]`}><Fit w={130}>繳回申請，謝謝!<Ret /></Fit></p>
      </div>
      <div className="absolute top-[553px] left-[1679px] h-[280px] w-[965px] border-r-[1.500px] border-[#333] font-['Liberation_Serif','Noto_Sans_CJK_TC',serif] text-[21.500px] leading-none text-black">
        <p className={large}><Fit w={259}>通知信主旨及內文如下：<Ret /></Fit></p>
        <p className={`${large} pl-[48px]`}><Fit w={234}>To:  承辦人及其 backup<Ret /></Fit></p>
        <p className={`${large} pl-[48px]`}><Fit w={84}>CC: NA<Ret /></Fit></p>
        <p className={`${large} pl-[35px]`}><Fit w={917}>主旨及內文：同仁:xxx  即將離職, 其權限已由主管指定需於 xxxx/xx/xx 停用, 請務必於當日將</Fit></p>
        <p className={`${large} pl-[178px]`}><Fit w={780}>此項權限停用，並於系統註記停用完成, 若無法停用也需於系統註記無法停用說</Fit></p>
        <p className={`${large} pl-[178px]`}><Fit w={55}>明。<Ret /></Fit></p>
        <p className={`${large} pl-[178px]`}><Fit w={102}><span className="text-[#0070c0] underline">表單連結</span><Ret /></Fit></p>
      </div>
    </>
  );
}

function Watermark({ className, children }: { className: string; children: ReactNode }) {
  return <div className={`absolute flex items-center text-[18px] leading-none font-light whitespace-nowrap text-[#b9b9b9] ${className}`}>{children}</div>;
}

/* ---------- canvas ---------- */

export default function App() {
  return (
    <div className="h-[4096px] w-[2792px] overflow-hidden bg-white">
      <div className="relative h-[4648px] w-[3168px] origin-top-left scale-[0.8813] bg-white font-['Noto_Sans','Noto_Sans_CJK_TC',sans-serif] text-[13px] leading-none whitespace-nowrap text-[#222]">
        {titles.map((t) => <Title key={`${t.x}-${t.cy}`} {...t} />)}

        <div className="absolute top-[91px] left-[17px]"><FilterPane status="待主管送件" rows={[]} /></div>
        <div className="absolute top-[272px] left-[17px] origin-top-left scale-[0.971]">
          <FilterPane
            status="全部"
            active
            rows={[
              ["MR510", "06519", "鄭O村", "2020/12/25", ""],
              ["MR510", "11400", "李O芬", "2020/12/28", ""],
              ["MR510", "12490", "林O斌", "2020/12/14", ""],
              ["MR510", "14777", "何O道", "2020/12/30", ""],
            ]}
          />
        </div>
        <div className="absolute top-[461px] left-[776px] h-[356px] w-[753px] overflow-hidden bg-[#f4f5f8]">
          <div className="w-[1062px] origin-top-left scale-[0.716]">
            <DisableForm toolbar topLine="h-[3px] border-t-2 border-[#8e3a4b]" titleClass="h-[29px]" state="待主管送件" items={[]} />
          </div>
        </div>
        <Cursor className="top-[778px] left-[1415px] scale-[0.7]" />
        <Watermark className="top-[832px] left-[1300px] h-[26px]"><Fit w={131}>啟用 Windows</Fit></Watermark>

        <div className="absolute top-[1086px] left-[34px]"><Portal /></div>
        <Cursor className="top-[1099px] left-[34px]" />
        <Watermark className="top-[1779px] left-[1272px] h-[14px] w-[140px] !items-start overflow-hidden"><Fit w={132}>啟用 Windows</Fit></Watermark>

        <div className="absolute top-[1975px] left-[210px] h-[760px] w-[1192px] overflow-hidden">
          <DisableForm topLine="h-[3.500px] bg-[#e0e0e0]" titleClass="h-[29.500px]" focused picker="right-[271px] w-[461px] !top-[6px]" tail logs={baseLogs} />
        </div>
        <Watermark className="top-[2729px] left-[1359px] h-[26px]"><Fit w={76}>啟用 Wir</Fit></Watermark>

        <div className="absolute top-[2886px] left-[33px] h-[419px] w-[896px] overflow-hidden">
          <div className="w-[1219px] origin-top-left scale-[0.735]"><ReturnForm /></div>
        </div>
        <div className="absolute top-[3211px] left-[489px] h-[423px] w-[1026px] overflow-hidden bg-[#f2f5fa] pl-[2px]">
          <div className="w-[1191px] origin-top-left scale-[0.853]"><DisableForm picker="right-[32px] w-[509px]" /></div>
        </div>
        <Watermark className="top-[3628px] left-[1295px] h-[26px]"><Fit w={132}>啟用 Windows</Fit></Watermark>

        <div className="absolute top-[3856px] left-[201px] h-[300px] overflow-hidden"><RequestForm /></div>
        <div className="absolute top-[4172px] left-[321px] h-[386px] w-[939px] overflow-hidden bg-[#f2f5fa]">
          <div className="w-[1195px] origin-top-left scale-[0.781]"><DisableForm picker="right-[32px] w-[509px]" /></div>
        </div>

        <MailView />
        <Samples />
        <Cursor className="top-[94px] left-[1757px]" />

        <div className="absolute top-[1509px] left-[1585px] flex h-[357px] w-[9px] flex-col border-t-2 border-[#b06a78] bg-[#f1f4f9]">
          <div className="h-[27px] bg-[#e2e2e2]" />
          <div className="mt-[24px] h-[53px] border-b-2 border-[#8e3a4b] bg-[#e2e2e2]" />
          <div className="h-[221px] bg-white pt-[4px]"><div className="h-[24px] w-[6px] border border-l-0 border-[#bbb]" /><div className="mt-[85px] h-[48px] w-[6px] border-y border-[#888]" /></div>
        </div>
        <Cursor className="top-[1161px] left-[2275px]" />
        <div className="absolute top-[1187px] left-[1752px] h-[706px] w-[1111px] overflow-hidden bg-[#f4f5f8] pl-[3px]">
          <div className="w-[1266px] origin-top-left scale-[0.875]">
            <DisableForm no="TO_2010_00016" who="李O芬" time="2020/10/30   00:00:21" date="2020/12/28" topLine="h-[1.500px] bg-[#d9d9d9]" titleClass="h-[29px]" items={["電腦帳號", "FTP"]} tail logs={ftpLogs} />
          </div>
        </div>

        <div className="absolute top-[2168px] left-[1703px] h-[370px] w-[155px] overflow-hidden"><div className="origin-top-left scale-[0.7]"><Sidebar user="楊O萍" activeSub extra /></div></div>
        <div className="absolute top-[2168px] left-[1857px] h-[637px] w-[991px] overflow-hidden border-l border-[#ddd] bg-[#f3f5f9] pl-[10px]">
          <div className="w-[1266px] origin-top-left scale-[0.776]">
            <DisableForm toolbar topLine="h-[2px]" titleClass="h-[29px]" tail logs={baseLogs} />
            <div className="mt-[10px] h-[2px] bg-[#888]" />
          </div>
        </div>
        <div className="absolute top-[2383px] left-[1787px] h-[138px] w-[1051px] border-x-[7px] border-t-[4px] border-b-[5px] border-[#3a3a3c] bg-white text-[9.500px]">
          <div className="flex h-[17px] items-center justify-between bg-[#8e3a4b] px-[13px] font-medium text-white">確認<X className="h-[8px] w-[8px]" strokeWidth={5} /></div>
          <div className="px-[14px]">
            <div className="mt-[8px] flex h-[14px] items-center"><Fit w={257}>您的簽核結果為<b className="text-[#e01010]">終止</b>，如有其他輔助意見，請說明於意見說明欄</Fit></div>
            <div className="flex h-[60px] justify-between border border-[#bcbcbc] pl-[3px] text-[9px]">
              <span className="mt-[2px]">test</span>
              <span className="flex flex-col justify-between bg-[#f6f6f6] py-[5px] text-[#aaa]"><ChevronUp className="h-[11px] w-[11px]" /><ChevronDown className="h-[11px] w-[11px]" /></span>
            </div>
            <div className="mt-[6px] flex justify-center gap-[5px] font-medium">
              <span className="flex h-[14px] w-[165px] items-center bg-[#b0405a] pl-[7px] text-white"><Check className="h-[9px] w-[9px]" strokeWidth={5} /><span className="grow text-center">確認</span></span>
              <span className="flex h-[14px] w-[164px] items-center bg-[#a8a8a8] pl-[5px] text-[#333]"><X className="h-[8px] w-[8px]" strokeWidth={5} /><span className="grow text-center">取消</span></span>
            </div>
          </div>
        </div>
        <Cursor className="top-[2003px] left-[1593px]" />

        <div className="absolute top-[3084px] left-[1599px]"><DimmedForm cursor /></div>

        {notes.map((n) => <Note key={`${n.x}-${n.y}`} {...n} />)}
        <Annotations />

        <div className="absolute top-[3460px] left-[2229px] h-[423px] w-[895px] overflow-hidden">
          <div className="-mt-[3px] -ml-[8px] w-[1067px] origin-top-left scale-[0.857]"><DimmedForm /></div>
          <div className="absolute inset-0 bg-black/50" />
          <div className="absolute top-[200px] left-[336px] flex flex-col gap-[6px]">
            <Toast className="h-[40px]"><Fit w={206}>An error occurred while executing the command</Fit><Fit w={191}>definition. See the inner exception for details.</Fit></Toast>
            <Toast className="h-[28px]">失敗</Toast>
          </div>
          <Cursor className="top-[299px] left-[59px]" light />
          <Watermark className="top-[411px] left-[651px] h-[12px] w-[140px] !items-start overflow-hidden !text-[#a9a9a9]"><Fit w={131}>啟用 Windows</Fit></Watermark>
        </div>
      </div>
    </div>
  );
}
